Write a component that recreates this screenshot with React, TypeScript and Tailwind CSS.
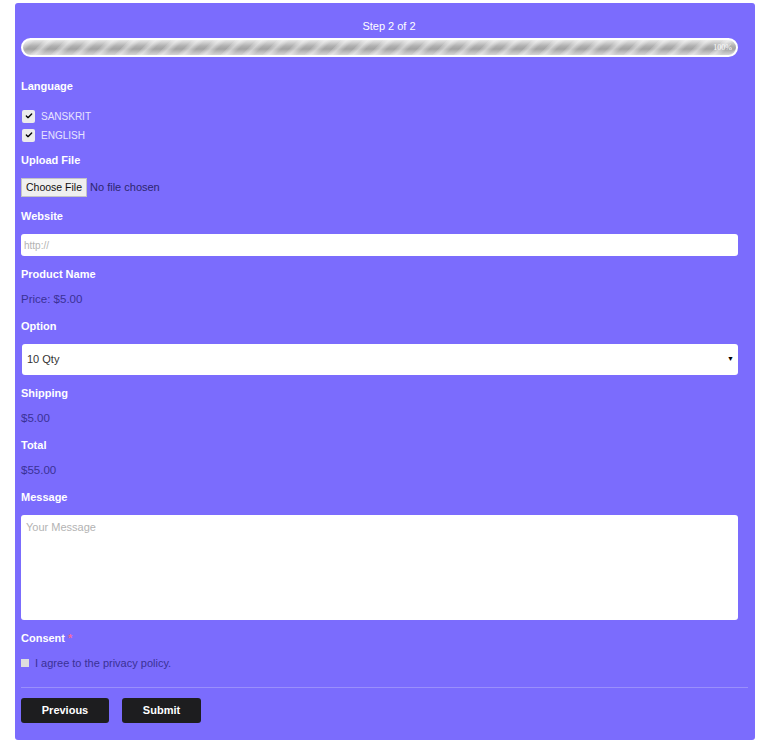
import { Check } from "lucide-react";

function Label({ children, className = "" }: { children: React.ReactNode; className?: string }) {
  return (
    <div className={`h-4 text-[11px] leading-4 font-bold text-white ${className}`}>{children}</div>
  );
}

function Text({ children, className = "" }: { children: React.ReactNode; className?: string }) {
  return <div className={`h-4 text-[11.5px] leading-4 text-[#3a3196] ${className}`}>{children}</div>;
}

function CheckRow({ label, className = "" }: { label: string; className?: string }) {
  return (
    <div className={`flex h-4 items-center gap-[6px] ${className}`}>
      <span className="ml-px flex size-[13px] items-center justify-center rounded-[2px] bg-[#ececec]">
        <Check className="size-[8px] text-black" strokeWidth={4} />
      </span>
      <span className="text-[10px] uppercase text-[#e8e4ff]">{label}</span>
    </div>
  );
}

export default function App() {
  return (
    <div className="min-h-[746px] bg-white pt-[3px] font-['Liberation_Sans',Arial,sans-serif]">
      <div className="ml-[15px] w-[740px] rounded-[3px] bg-[#7b6cfd] pb-[17px] pl-[6px] pr-[2px] pt-[14px]">
        <div className="w-[717px]">
          <div className="h-[18px] pl-[19px] text-center text-[11px] leading-[18px] text-white">Step 2 of 2</div>
          <div className="mt-[3px] h-[19px] rounded-full border-2 border-white bg-[repeating-linear-gradient(135deg,rgba(255,255,255,0.1)_0px,rgba(255,255,255,0.45)_4px,rgba(255,255,255,0.1)_8px,transparent_9px,transparent_15px),linear-gradient(to_bottom,#e6e6e6,#b0b0b0_40%,#a2a2a2_60%,#d6d6d6)]">
            <div className="pr-[4px] text-right font-['Liberation_Serif',serif] text-[8px] leading-[15px] text-white">100%</div>
          </div>

          <Label className="mt-[21px]">Language</Label>
          <CheckRow label="Sanskrit" className="mt-[14px]" />
          <CheckRow label="English" className="mt-[3px]" />

          <Label className="mt-[9px]">Upload File</Label>
          <div className="mt-[10px] flex h-[19px] items-center">
            <span className="flex h-[19px] items-center border border-[#c4c4c4] bg-[#efefef] px-[4px] text-[10.5px] text-[#111]">
              Choose File
            </span>
            <span className="ml-[3px] text-[11px] text-[#2d2670]">No file chosen</span>
          </div>

          <Label className="mt-[11px]">Website</Label>
          <div className="mt-[10px] flex h-[22px] items-center rounded-[3px] bg-white px-[3px] text-[10px] text-[#b3b3b3]">
            http://
          </div>

          <Label className="mt-[10px]">Product Name</Label>
          <Text className="mt-[9px]">Price: $5.00</Text>

          <Label className="mt-[11px]">Option</Label>
          <div className="mt-[10px] ml-px flex h-[31px] items-center justify-between rounded-[3px] bg-white pl-[5px] pr-[4px] text-[11px] text-[#333]">
            <span>10 Qty</span>
            <span className="text-[7px] text-black">▼</span>
          </div>

          <Label className="mt-[10px]">Shipping</Label>
          <Text className="mt-[9px]">$5.00</Text>

          <Label className="mt-[11px]">Total</Label>
          <Text className="mt-[9px]">$55.00</Text>

          <Label className="mt-[11px]">Message</Label>
          <div className="mt-[10px] h-[105px] rounded-[3px] bg-white px-[5px] pt-[4px] text-[11px] text-[#b3b3b3]">
            Your Message
          </div>

          <Label className="mt-[10px]">
            Consent <span className="text-[#f06a9a]">*</span>
          </Label>
          <div className="mt-[9px] flex h-4 items-center gap-[6px]">
            <span className="size-[8px] bg-[#dedede]" />
            <span className="text-[11px] text-[#3a3196]">I agree to the privacy policy.</span>
          </div>
        </div>

        <div className="mt-[16px] h-px w-[727px] bg-[#9a8ffb]" />

        <div className="mt-[10px] flex gap-[13px]">
          <button className="flex h-[25px] w-[88px] items-center justify-center rounded-[3px] bg-[#1d1d1f] text-[11px] font-bold text-white">
            Previous
          </button>
          <button className="flex h-[25px] w-[79px] items-center justify-center rounded-[3px] bg-[#1d1d1f] text-[11px] font-bold text-white">
            Submit
          </button>
        </div>
      </div>
    </div>
  );
}
